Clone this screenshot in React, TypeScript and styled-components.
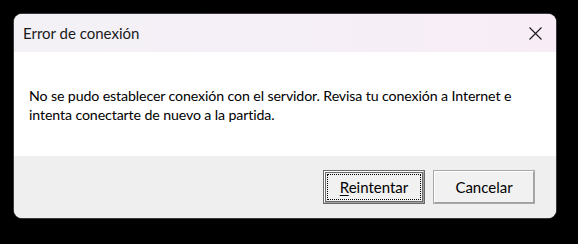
import React from "react";
import styled, { createGlobalStyle } from "styled-components";

const Global = createGlobalStyle`
  html, body { margin: 0; padding: 0; background: #000; }
  body { font-family: Lato, "Noto Sans", sans-serif; }
`;

const Stage = styled.div`
  width: 578px;
  height: 244px;
  background: #000;
  padding: 14px 0 0 14px;
  box-sizing: border-box;
`;

const Dialog = styled.div`
  width: 542px;
  height: 204px;
  border-radius: 8px;
  overflow: hidden;
  display: flex;
  flex-direction: column;
  background: #fff;
  box-shadow: 0 0 0 1px #3a3a3a;
`;

const TitleBar = styled.div`
  height: 38px;
  flex: none;
  display: flex;
  align-items: center;
  justify-content: space-between;
  padding: 0 14px 0 9px;
  background: linear-gradient(90deg, #f3f1f6 0%, #f5eff7 50%, #f8edf6 100%);
`;

const Title = styled.span`
  font-size: 15px;
  color: #1a1a1a;
`;

const CloseIcon = styled.svg`
  width: 13px;
  height: 13px;
  display: block;
`;

const Body = styled.div`
  flex: 1;
  background: #fff;
  padding: 34px 15px 0 15px;
`;

const Message = styled.p`
  margin: 0;
  font-size: 14.2px;
  line-height: 19px;
  letter-spacing: -0.12px;
  white-space: nowrap;
  color: #000;
`;

const Footer = styled.div`
  height: 62px;
  flex: none;
  background: #efefef;
  display: flex;
  justify-content: flex-end;
  align-items: flex-start;
  gap: 10px;
  padding: 15px 22px 0 0;
  box-sizing: border-box;
`;

const Button = styled.button<{ $default?: boolean }>`
  width: 100px;
  height: 32px;
  box-sizing: border-box;
  background: #f1f1f1;
  font-family: inherit;
  font-size: 15px;
  color: #000;
  position: relative;
  padding: 0;
  cursor: default;
  border: 1px solid;
  border-color: #ffffff #a0a0a0 #a0a0a0 #ffffff;
  box-shadow: ${(p) =>
    p.$default
      ? "0 0 0 1px #6a6a6a, inset 0 0 0 1px #6a6a6a"
      : "0 0 0 1px #a8a8a8"};
  outline: none;
  &::after {
    content: "";
    display: ${(p) => (p.$default ? "block" : "none")};
    position: absolute;
    inset: 2px;
    border: 1px dotted #000;
  }
`;

const Mnemonic = styled.span`
  text-decoration: underline;
  text-underline-offset: 2px;
`;

export default function App() {
  return (
    <>
      <Global />
      <Stage>
        <Dialog>
          <TitleBar>
            <Title>Error de conexión</Title>
            <CloseIcon viewBox="0 0 13 13">
              <path d="M0.5 0.5 L12.5 12.5 M12.5 0.5 L0.5 12.5" stroke="#1a1a1a" strokeWidth="1.1" />
            </CloseIcon>
          </TitleBar>
          <Body>
            <Message>
              No se pudo establecer conexión con el servidor. Revisa tu conexión a Internet e
              <br />
              intenta conectarte de nuevo a la partida.
            </Message>
          </Body>
          <Footer>
            <Button $default>
              <Mnemonic>R</Mnemonic>eintentar
            </Button>
            <Button>Cancelar</Button>
          </Footer>
        </Dialog>
      </Stage>
    </>
  );
}
